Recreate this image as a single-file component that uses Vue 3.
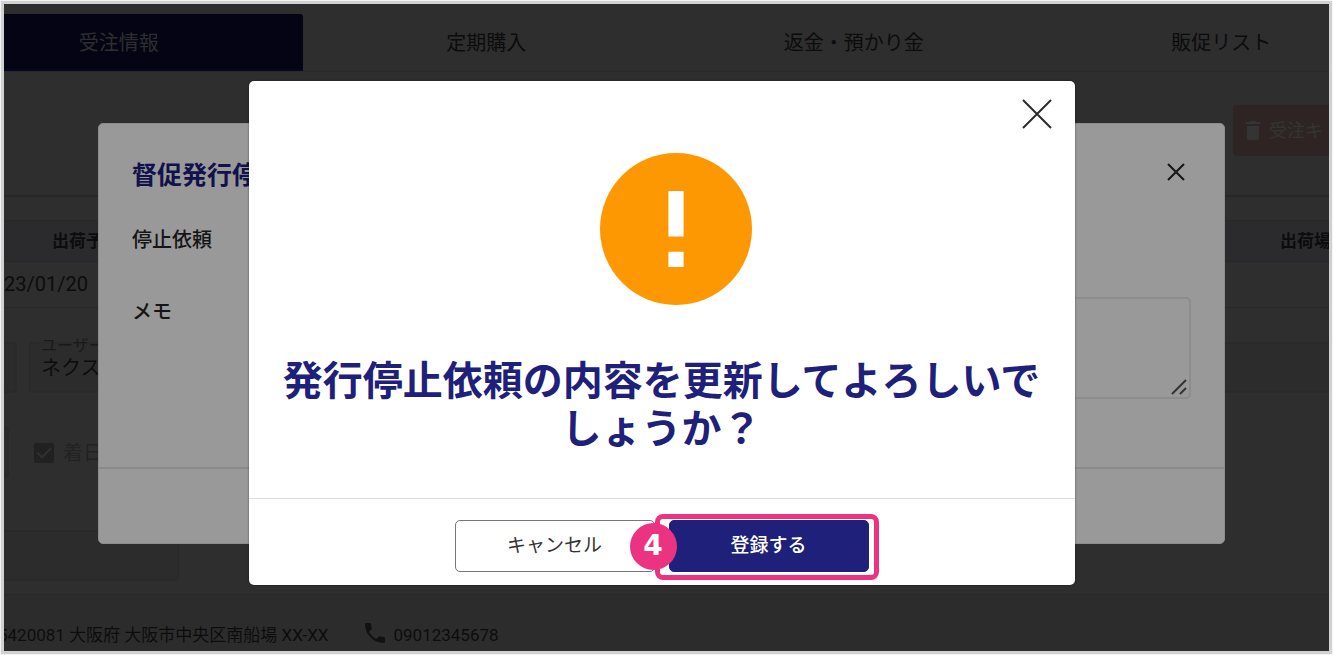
<script setup>
import { ref } from 'vue'

const tabs = ['受注情報', '定期購入', '返金・預かり金', '販促リスト']
const activeTab = ref(0)
const userName = ref('ネクス')
const fixedDate = ref(true)
const memo = ref('')
</script>

<template>
  <div class="page">
    <div class="frame">
      <main class="order">
        <nav class="tabs">
          <button
            v-for="(tab, i) in tabs"
            :key="tab"
            type="button"
            class="tab"
            :class="{ active: i === activeTab }"
            @click="activeTab = i"
          >{{ tab }}</button>
        </nav>

        <div class="actions">
          <button type="button" class="cancel-order">
            <svg width="14" height="19" viewBox="0 0 14 19" aria-hidden="true">
              <path d="M1 5h12v12a2 2 0 0 1-2 2H3a2 2 0 0 1-2-2zM0 1h4l1-1h4l1 1h4v2H0z" fill="currentColor" />
            </svg>
            <span>受注キ</span>
          </button>
        </div>

        <table class="shipping">
          <thead>
            <tr><th class="date-col">出荷予定</th><th class="place-col">出荷場</th></tr>
          </thead>
          <tbody>
            <tr><td>23/01/20</td><td></td></tr>
          </tbody>
        </table>

        <div class="row names">
          <input class="field stub" aria-label="区分" readonly />
          <div class="field user">
            <label for="user">ユーザー</label>
            <input id="user" v-model="userName" />
          </div>
          <input class="field wide" aria-label="備考" readonly />
        </div>
        <div class="row dates">
          <input class="field edge" aria-label="日付" readonly />
          <label class="check"><input v-model="fixedDate" type="checkbox" /><span>着日</span></label>
        </div>
        <div class="row extra">
          <input class="field note" aria-label="メモ欄" readonly />
        </div>

        <footer class="contact">
          <span class="address">5420081 大阪府 大阪市中央区南船場 XX-XX</span>
          <svg width="20" height="20" viewBox="3 3 18 18" aria-hidden="true">
            <path d="M6.62 10.79c1.44 2.83 3.76 5.14 6.59 6.59l2.2-2.2c.27-.27.67-.36 1.02-.24 1.12.37 2.33.57 3.57.57.55 0 1 .45 1 1V20c0 .55-.45 1-1 1-9.39 0-17-7.61-17-17 0-.55.45-1 1-1h3.5c.55 0 1 .45 1 1 0 1.25.2 2.45.57 3.57.11.35.03.74-.25 1.02z" fill="#111" />
          </svg>
          <span>09012345678</span>
        </footer>
      </main>

      <div class="overlay">
        <section class="request" aria-label="督促発行停止">
          <header class="request-head">
            <h2>督促発行停止</h2>
            <button type="button" class="close" aria-label="閉じる">
              <svg width="18" height="18" viewBox="0 0 18 18"><path d="M1 1l16 16M17 1L1 17" stroke="#151515" stroke-width="2" /></svg>
            </button>
          </header>
          <div class="request-body">
            <div class="item">停止依頼</div>
            <div class="item memo">
              <label for="memo">メモ</label>
              <div class="memo-box">
                <textarea id="memo" v-model="memo"></textarea>
                <svg class="grip" width="16" height="16" viewBox="0 0 16 16" aria-hidden="true">
                  <path d="M1 15L15 1M9 15l6-6" stroke="#333" stroke-width="2" />
                </svg>
              </div>
            </div>
          </div>
          <div class="request-foot"></div>
        </section>
      </div>

      <div class="overlay">
        <section class="confirm" role="dialog" aria-labelledby="confirm-title">
          <div class="confirm-body">
            <button type="button" class="close" aria-label="閉じる">
              <svg width="30" height="30" viewBox="0 0 30 30"><path d="M1 1l28 28M29 1L1 29" stroke="#2a2a2a" stroke-width="2" /></svg>
            </button>
            <svg class="warn" width="152" height="152" viewBox="0 0 20 20" aria-hidden="true">
              <circle cx="10" cy="10" r="10" fill="#fd9802" />
              <path d="M9 5h2v6H9zM9 13h2v2H9z" fill="#fff" />
            </svg>
            <h1 id="confirm-title">発行停止依頼の内容を更新してよろしいでしょうか？</h1>
          </div>
          <footer class="confirm-foot">
            <button type="button" class="btn">キャンセル</button>
            <div class="target">
              <button type="button" class="btn primary">登録する</button>
              <span class="ring"></span>
              <span class="step">4</span>
            </div>
          </footer>
        </section>
      </div>
    </div>
  </div>
</template>

<style>
body {
  margin: 0;
  background: #f4f4f4;
}
</style>

<style scoped>
* {
  box-sizing: border-box;
}
button,
input,
textarea {
  font: inherit;
  color: inherit;
  padding: 0;
  border: 0;
  background: none;
}
button {
  cursor: pointer;
}
svg {
  display: block;
}
.page {
  min-height: 100vh;
  padding: 1px;
  display: flex;
  font: 20px/24px Roboto, "Noto Sans CJK JP", sans-serif;
}
.frame {
  position: relative;
  flex: 1;
  min-width: 0;
  overflow: hidden;
  border: 3px solid #d1d1d1;
  background: #2e2e2e;
}
.order {
  height: 100%;
  display: flex;
  flex-direction: column;
  color: #0c0c0c;
}
.tabs {
  display: grid;
  grid-template-columns: repeat(4, 1fr);
  margin: 10px -76px 0 -69px;
  border-bottom: 1px solid #292929;
}
.tab {
  height: 57px;
  border-radius: 3px 3px 0 0;
  color: #0c0c0c;
}
.tab.active {
  background: #040414;
  box-shadow: inset 0 -2px #06061d;
  color: #2e2e2e;
}
.actions {
  display: flex;
  justify-content: flex-end;
  padding: 33px 0 39px;
  border-bottom: 2px solid #272727;
}
.cancel-order {
  display: flex;
  align-items: center;
  gap: 9px;
  width: 96px;
  height: 51px;
  padding-left: 13px;
  border-radius: 4px 0 0 4px;
  background: #2f2424;
  color: #343434;
  font-size: 18px;
  white-space: nowrap;
}
.cancel-order svg {
  flex: none;
}
.shipping {
  width: 100%;
  margin-top: 23px;
  border-collapse: collapse;
  table-layout: fixed;
  text-align: left;
  white-space: nowrap;
}
.shipping th {
  height: 41px;
  padding: 0;
  background: #2b2b2e;
  border: solid #282829;
  border-width: 1px 0;
  font-size: 17px;
}
.shipping .date-col {
  padding-left: 48px;
}
.shipping .place-col {
  width: 49px;
}
.shipping td {
  height: 46px;
  padding: 0 0 2px;
  border-bottom: 1px solid #282828;
}
.row {
  display: flex;
}
.names {
  margin-top: 34px;
  gap: 12px;
}
.field {
  height: 51px;
  border: 2px solid #2a2a2a;
  border-radius: 4px;
  background: #2c2c2c;
}
.stub {
  width: 13px;
  border-left: 0;
  border-radius: 0 4px 4px 0;
}
.user {
  width: 220px;
  padding-left: 10px;
}
.user label {
  display: block;
  width: 80px;
  margin-top: -8px;
  font-size: 16px;
  line-height: 20px;
  color: #191919;
}
.user input {
  display: block;
  width: 100%;
  height: 24px;
}
.wide {
  flex: 1;
  min-width: 0;
  border-right: 0;
  border-radius: 4px 0 0 4px;
}
.dates {
  margin-top: 34px;
  gap: 25px;
}
.edge {
  width: 5px;
  border-left: 0;
  border-radius: 0 4px 4px 0;
}
.check {
  display: flex;
  align-items: center;
  gap: 9px;
  color: #222;
}
.check input {
  appearance: none;
  display: grid;
  place-items: center;
  width: 20px;
  height: 20px;
  margin: 0;
  border-radius: 2px;
  background: #212121;
}
.check input:checked::after {
  content: "";
  width: 12px;
  height: 6px;
  margin-bottom: 4px;
  border: solid #303030;
  border-width: 0 0 2px 2px;
  transform: rotate(-45deg);
}
.extra {
  margin-top: 52px;
}
.note {
  width: 175px;
  border-left: 0;
  border-radius: 0 4px 4px 0;
}
.contact {
  flex: 1;
  display: flex;
  align-items: flex-start;
  margin-top: 13px;
  padding-top: 28px;
  border-top: 1px solid #292929;
  background: #2c2c2c;
  font-size: 17px;
  white-space: nowrap;
}
.contact .address {
  margin-left: -6px;
  margin-right: 37px;
}
.contact svg {
  margin-right: 8px;
}
.overlay {
  position: absolute;
  inset: 0;
  display: grid;
  place-items: center;
  padding: 11px 10px 0 0;
}
.request {
  width: calc(100% - 188px);
  border: 1px solid #8c8c8c;
  border-radius: 5px;
  background: #999;
  color: #151515;
}
.request-head {
  display: flex;
  align-items: flex-start;
  justify-content: space-between;
  padding: 32px 39px 0 33px;
}
.request-head h2 {
  margin: 0;
  font-size: 25px;
  line-height: 40px;
  font-weight: 700;
  color: #11114c;
}
.request-head .close {
  margin-top: 7px;
}
.request-body {
  padding: 32px 33px 68px;
  font-weight: 500;
}
.item {
  line-height: 24px;
}
.item.memo {
  display: flex;
  margin-top: 45px;
}
.item.memo label {
  width: 190px;
  padding-top: 3px;
}
.memo-box {
  position: relative;
  flex: 1;
}
textarea {
  display: block;
  width: 100%;
  height: 102px;
  border: 2px solid #8d8d8d;
  border-radius: 5px;
  resize: none;
}
.grip {
  position: absolute;
  right: 4px;
  bottom: 4px;
}
.request-foot {
  height: 76px;
  border-top: 2px solid #898989;
}
.confirm {
  width: calc(100% - 489px);
  border-radius: 5px;
  background: #fff;
  box-shadow: 0 0 2px #0009;
}
.confirm-body {
  position: relative;
  display: flex;
  flex-direction: column;
  align-items: center;
  padding: 72px 32px 44px;
}
.confirm-body .close {
  position: absolute;
  top: 18px;
  right: 23px;
}
.warn {
  margin-left: 28px;
}
.confirm h1 {
  margin: 53px 0 0;
  font-size: 40px;
  line-height: 48px;
  font-weight: 700;
  text-align: center;
  color: #1e207a;
}
.confirm-foot {
  display: flex;
  justify-content: center;
  gap: 14px;
  padding: 21px 0 13px;
  border-top: 1px solid #ddd;
}
.btn {
  width: 200px;
  height: 52px;
  border: 1px solid #777;
  border-radius: 5px;
  background: #fff;
  color: #333;
  font-size: 19px;
}
.btn.primary {
  border-color: #1e207a;
  background: #1e207a;
  color: #fff;
  font-weight: 500;
}
.target {
  position: relative;
}
.ring {
  position: absolute;
  inset: -6px -10px -8px -14px;
  border: 5px solid #ec3382;
  border-radius: 8px;
  pointer-events: none;
}
.step {
  position: absolute;
  left: -39px;
  top: 3px;
  width: 47px;
  height: 47px;
  border-radius: 50%;
  background: #ec3382;
  color: #fff;
  font: 700 28px/46px "DejaVu Sans", sans-serif;
  text-align: center;
}
</style>
